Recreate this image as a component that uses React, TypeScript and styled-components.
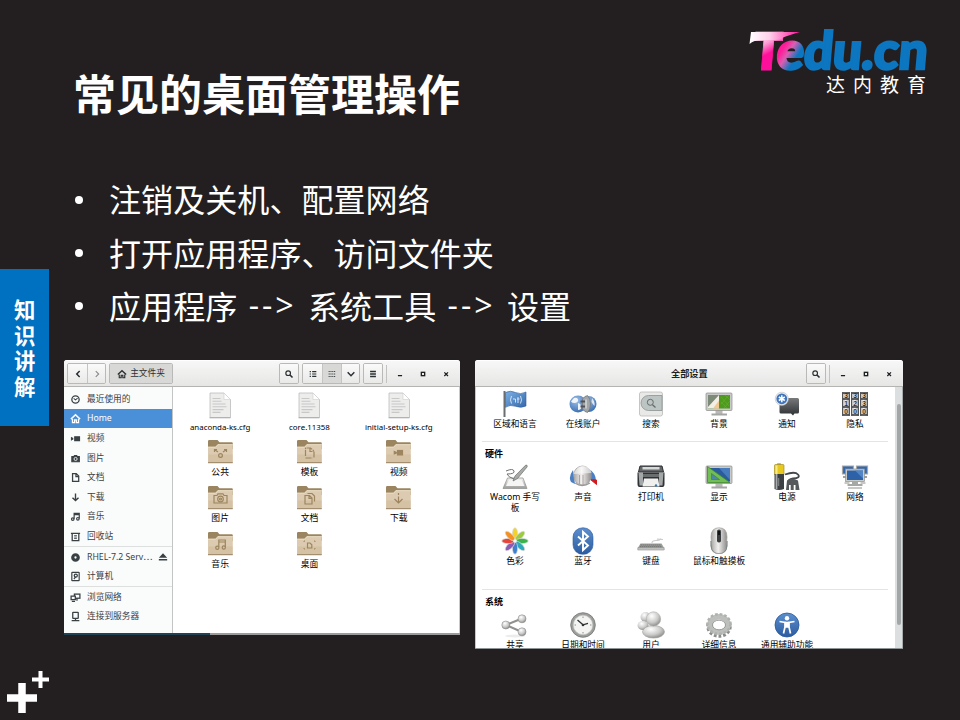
import React from "react";
import styled, { createGlobalStyle, css } from "styled-components";

const Global = createGlobalStyle`
  *, *::before, *::after { box-sizing: border-box; }
  body { margin: 0; background: #231f20; }
`;

const cjk = `"Noto Sans CJK SC", sans-serif`;

/* ---------- slide ---------- */

const Slide = styled.main`
  display: flex;
  width: 960px;
  height: 720px;
  overflow: hidden;
  background: #231f20;
  color: #fff;
  font-family: ${cjk};
`;

const Rail = styled.aside`
  display: flex;
  flex-direction: column;
  justify-content: space-between;
  width: 64px;
  padding: 269px 0 7px;
`;

const SectionTag = styled.div`
  width: 49px;
  height: 157px;
  padding: 27px 13px 0 14px;
  background: #0070c0;
  font-size: 21.4px;
  font-weight: 700;
  line-height: 25.6px;
  word-break: break-all;
`;

const Main = styled.div`
  display: flex;
  flex-direction: column;
  width: 896px;
`;

const Header = styled.header`
  display: flex;
  justify-content: space-between;
  height: 172px;
  padding: 28px 28px 0 9px;
`;

const Title = styled.h1`
  margin: 32px 0 0;
  font-size: 43px;
  font-weight: 700;
  line-height: 64px;
`;

const Points = styled.ul`
  display: flex;
  flex-direction: column;
  height: 188px;
  margin: 0;
  padding: 0 0 0 10px;
  list-style: none;
`;

const Point = styled.li`
  display: flex;
  align-items: center;
  height: 53.4px;
  font-size: 32.1px;
  line-height: 52.6px;
  white-space: pre;

  &::before {
    content: "";
    width: 8px;
    height: 8px;
    margin: 2px 26px 0 1px;
    border-radius: 50%;
    background: #fff;
  }
`;

const Arrow = styled.span`
  font-family: "Open Sans", sans-serif;
  letter-spacing: 3px;
`;

const Windows = styled.section`
  display: flex;
  align-items: flex-start;
  gap: 15px;
`;

/* ---------- window chrome ---------- */

const Window = styled.div<{ $w: number; $h: number }>`
  display: flex;
  flex-direction: column;
  width: ${(p) => p.$w}px;
  height: ${(p) => p.$h}px;
  overflow: hidden;
  border-radius: 3px 3px 0 0;
  background: #fff;
  color: #1c1f20;
  font-family: "Noto Sans", ${cjk};
  font-size: 8.7px;
`;

const TitleBar = styled.div`
  display: flex;
  flex: none;
  align-items: center;
  height: 27px;
  padding: 0 4px 0 3px;
  border-top: 1px solid #fff;
  border-bottom: 1px solid #b4b4b2;
  background: linear-gradient(#f7f7f7, #e6e6e5);
`;

const ButtonGroup = styled.div<{ $ml?: number }>`
  display: flex;
  height: 21px;
  margin-left: ${(p) => p.$ml ?? 0}px;
  border: 1px solid #b9b9b7;
  border-radius: 2px;
  overflow: hidden;
`;

const Button = styled.button<{ $w: number; $active?: boolean }>`
  display: flex;
  align-items: center;
  justify-content: center;
  gap: 3px;
  width: ${(p) => p.$w}px;
  padding: 0;
  border: 0;
  background: ${(p) => (p.$active ? "#d8d8d6" : "linear-gradient(#fafafa, #e9e9e8)")};
  color: #2a3033;
  font: inherit;
  line-height: 19px;
  white-space: nowrap;

  & + & {
    border-left: 1px solid #c4c4c2;
  }
`;

const Caption = styled.div`
  flex: 1;
  padding-left: 193px;
  font-size: 9.2px;
  font-weight: 700;
  line-height: 24px;
  white-space: nowrap;
`;

const Spacer = styled.div`
  flex: 1;
`;

const WindowControls = styled.div`
  display: flex;
  align-items: center;
  width: 70px;
  height: 18px;
  margin-left: 3px;
  padding-left: 8px;
  gap: 13px;
  border-left: 1px solid #c2c2c0;
`;

/* ---------- file manager ---------- */

const FilesBody = styled.div`
  display: flex;
  height: 246px;
  border-right: 1px solid #c9c9c9;
`;

const Sidebar = styled.nav`
  width: 109px;
  padding-top: 2px;
  border-right: 1px solid #c3c4c4;
  background: #fafbfb;
`;

const Place = styled.div<{ $active?: boolean; $divided?: boolean }>`
  display: flex;
  align-items: center;
  height: 19.6px;
  padding: 1px 5px 0 6px;
  gap: 6px;
  color: #3a4144;
  line-height: 19px;
  white-space: nowrap;

  svg {
    flex: none;
  }

  ${(p) =>
    p.$divided &&
    css`
      height: 20.6px;
      border-top: 1px solid #dedfdf;
    `}
  ${(p) =>
    p.$active &&
    css`
      background: #4a90d9;
      color: #fff;
    `}
`;

const PlaceName = styled.span`
  flex: 1;
`;

const FileGrid = styled.div`
  display: grid;
  flex: 1;
  grid-template-columns: repeat(3, 89.3px);
  grid-auto-rows: 46px;
  align-content: start;
  padding: 5px 0 0 2.5px;
`;

const FileCell = styled.div<{ $folder?: boolean }>`
  display: flex;
  flex-direction: column;
  align-items: center;
  padding-top: ${(p) => (p.$folder ? 1 : 0)}px;
  line-height: 15px;
  white-space: nowrap;
`;

const FileName = styled.span<{ $latin?: boolean }>`
  margin-top: ${(p) => (p.$latin ? 0 : 1)}px;
  font-size: ${(p) => (p.$latin ? 7.9 : 8.8)}px;
  color: #000;
`;

const FilesShadow = styled.div`
  display: flex;
  height: 2px;
  background: linear-gradient(90deg, #204455 0 146px, #9b9b9b 146px);
`;

/* ---------- settings ---------- */

const SettingsBody = styled.div`
  display: flex;
  height: 261px;
  overflow: hidden;
  border-left: 1px solid #c8c8c8;
`;

const Panels = styled.div`
  width: 419px;
  padding: 0 7px 0 6px;
`;

const Group = styled.section<{ $h: number; $top?: number }>`
  height: ${(p) => p.$h}px;
  padding-top: ${(p) => p.$top ?? 0}px;
  border-bottom: 1px solid #e4e4e4;
`;

const GroupTitle = styled.h2`
  margin: 0;
  padding: 4px 0 0 3px;
  color: #000;
  font-size: 9px;
  font-weight: 700;
  line-height: 15px;
`;

const PanelGrid = styled.div`
  display: grid;
  grid-template-columns: repeat(6, 68px);
  grid-auto-rows: 64px;
  margin-left: -1px;
`;

const Panel = styled.div`
  display: flex;
  flex-direction: column;
  align-items: center;
  gap: 1px;
  padding-top: 2px;
  color: #000;
  line-height: 11px;
  text-align: center;

  svg {
    flex: none;
  }
`;

const PanelName = styled.span`
  white-space: pre;
`;

const ScrollTrack = styled.div`
  width: 8px;
  height: 261px;
  padding: 17px 1px 0 2px;
  border-right: 1px solid #a9acad;
  background: #dcdfdf;
`;

const ScrollThumb = styled.div`
  width: 4px;
  height: 221px;
  border-radius: 2px;
  background: #a3a6a7;
`;

const SettingsEdge = styled.div`
  height: 1px;
  background: #8f9596;
`;

/* ---------- small symbolic icons ---------- */

const glyphs: Record<string, React.ReactNode> = {
  back: <path d="M8 2.5 4.5 6 8 9.5" strokeWidth="1.8" />,
  forward: <path d="M4.5 2.5 8 6 4.5 9.5" stroke="#888" strokeWidth="1.3" />,
  down: <path d="m2 4 4 4 4-4" strokeWidth="1.8" />,
  search: (
    <>
      <circle cx="5" cy="5" r="2.8" strokeWidth="1.4" />
      <path d="m7.2 7.2 3 3" strokeWidth="1.9" />
    </>
  ),
  list: <path d="M2 3.2h1.5M5 3.2h5M2 6h1.5M5 6h5M2 8.8h1.5M5 8.8h5" strokeWidth="1.4" />,
  grid: <path d="M2 3h8M2 6h8M2 9h8" strokeWidth="1.2" strokeDasharray="1.2 1" />,
  menu: <path d="M2.5 3h7M2.5 6h7M2.5 9h7" strokeWidth="1.6" />,
  min: <path d="M3.5 8h5" strokeWidth="1.6" />,
  max: <rect x="4" y="4" width="4" height="4" strokeWidth="1.6" />,
  close: <path d="m4 4 4.4 4.4M8.4 4 4 8.4" strokeWidth="1.5" />,
  home: (
    <>
      <path d="M1 6.700 6 2l5 4.700" strokeWidth="1.6" />
      <path d="M2.700 6.500v4h2.300V7.500h2v3h2.300v-4" strokeWidth="1.400" />
    </>
  ),
  clock: (
    <>
      <circle cx="6" cy="6" r="4" strokeWidth="1.400" />
      <path d="m4 4.800 2 1.600L8.300 4.500" strokeWidth="1.100" />
    </>
  ),
  video: (
    <>
      <rect x="4.500" y="3.500" width="6.500" height="5.500" fill="currentColor" stroke="none" />
      <path d="m1 4 2.600 1.400v1.700L1 8.500z" fill="currentColor" stroke="none" />
    </>
  ),
  camera: (
    <>
      <path d="M2 4h2l1-1.300h2.200L8.200 4h2v5.500H2z" fill="currentColor" strokeWidth="1.200" />
      <circle cx="6.100" cy="6.500" r="1.700" stroke="#fff" fill="none" strokeWidth=".9" />
    </>
  ),
  doc: <path d="M2.800 1.800h4L9.500 4.500V10.200H2.800zM6.500 2v3h3" strokeWidth="1.400" />,
  download: <path d="M6 1.500v7.500M2.700 6.200 6 9.400l3.300-3.200" strokeWidth="1.500" />,
  music: (
    <>
      <path d="M4.500 8.500V2.600h5.600v5.700M4.500 4h5.500" strokeWidth="1.300" />
      <circle cx="3" cy="8.800" r="1.400" strokeWidth="1.300" />
      <circle cx="8.600" cy="8.500" r="1.400" strokeWidth="1.300" />
    </>
  ),
  trash: (
    <>
      <path d="M1 2.500h10M2.400 3v7.500h7.200V3" strokeWidth="1.400" />
      <path d="M4.500 5h3M4.500 6.600h3M4.500 8.200h3" strokeWidth=".9" />
    </>
  ),
  disc: <circle cx="6" cy="6" r="3" strokeWidth="3.500" />,
  drive: (
    <>
      <rect x="2" y="1.400" width="8" height="9.200" rx=".5" strokeWidth="1.300" />
      <circle cx="6.300" cy="5" r="1.700" strokeWidth="1.400" />
      <path d="M4.200 8.700 6.200 6.500" strokeWidth="1.300" />
    </>
  ),
  network: (
    <>
      <rect x="4.800" y="2.300" width="6" height="4.500" strokeWidth="1.400" />
      <rect x="1.200" y="4.500" width="4.600" height="3.800" fill="#fafbfb" strokeWidth="1.400" />
      <path d="M2 10.200h3.500M7.600 6.500V9.500" strokeWidth="1.400" />
    </>
  ),
  server: (
    <>
      <rect x="3" y="1.500" width="6" height="6.500" rx=".5" strokeWidth="1.400" />
      <path d="M6 8v2M1.800 10.600h8.400" strokeWidth="1.400" />
    </>
  ),
  eject: <path d="M6 1.500 11 7H1zM1 8.300h10v2H1z" fill="currentColor" stroke="none" />,
};

const Glyph = ({ name, size = 10 }: { name: string; size?: number }) => (
  <svg width={size} height={size} viewBox="0 0 12 12" fill="none" stroke="currentColor">
    {glyphs[name]}
  </svg>
);

/* ---------- file icons ---------- */

const TextFileIcon = () => (
  <svg width="24" height="28" viewBox="0 0 24 28">
    <path d="M2 1h14l6.500 6.500V25.500H2z" fill="#ededec" stroke="#bdbdbc" strokeWidth=".8" />
    <path d="M16 1v6.500h6.500z" fill="#fff" stroke="#cfcfce" strokeWidth=".6" />
    <path d="M4.500 6.500h8M4.500 9.300h9M4.500 12h13M4.500 14.800h14M4.500 17.600h11M4.500 20.400h8" stroke="#c8c8c7" strokeWidth="1.100" />
    <path d="M1.500 25.800h21" stroke="#a5a5a5" strokeWidth=".9" />
  </svg>
);

const emblems: Record<string, React.ReactNode> = {
  share: (
    <>
      <circle cx="13.500" cy="16.500" r="1.900" />
      <path d="m11 13-3.500-2.500m0 2.500v-2.500H10M16 13l3.500-2.500m0 2.500v-2.500H17" />
    </>
  ),
  template: <path d="M9.500 17V9h5l3.500 3v7M14 9v3.500h4M9.500 19h7" strokeDasharray="6 .8 1.500 .8" />,
  video: (
    <>
      <rect x="12.500" y="11.500" width="5" height="4.400" fill="#9c855f" />
      <path d="m9.300 12.500 2 .8v.8l-2 .8z" fill="#9c855f" />
    </>
  ),
  camera: (
    <>
      <path d="M7 10.500h3l1-1.700h5l1 1.700h3V18H7z" />
      <circle cx="13.500" cy="14" r="2.800" />
      <circle cx="13.500" cy="14" r="1" />
    </>
  ),
  docs: <path d="M9 10.500h4.500L16 13v6H9zM13 10.500V13.300h3M11.500 8.500h4.500L18.500 11v5.500" />,
  download: <path d="M13.500 8v2M13.500 11.500v5.500M9.500 14l4 4 4-4" />,
  music: (
    <>
      <path d="M11.800 16V9h6.500v7M12 11h6" />
      <circle cx="10.300" cy="16.700" r="1.600" />
      <circle cx="16.800" cy="16.500" r="1.600" />
    </>
  ),
  desktop: (
    <>
      <path d="M11.500 12h2.500l1.800 1.800v3.200h-4.300z" />
      <path d="M8 11v-1h1M18 10h1v1M8 17v1h1M18 18h1V17" strokeWidth=".9" />
    </>
  ),
};

const FolderIcon = ({ emblem }: { emblem: string }) => (
  <svg width="27" height="25" viewBox="0 0 27 25">
    <path d="M1 2.200q0-1.200 1.200-1.200h8.300l2 2.300H24.800q1 0 1 1V10H1z" fill="#9b8560" />
    <path d="M1 7.800h7.500l2.300-2.500h15V23.600H1z" fill="#dccbb0" />
    <path d="M1.500 15.500h24V23h-24z" fill="#d5c1a3" />
    <path d="M1 8.200h7.600l2.300-2.500h14.900" stroke="#efe3cd" strokeWidth=".8" fill="none" />
    <path d="M1 23.700h24.800" stroke="#927b58" strokeWidth="1" />
    <g stroke="#9c855f" strokeWidth="1.200" fill="none">{emblems[emblem]}</g>
  </svg>
);

/* ---------- settings icons ---------- */

const GradientDefs = styled.svg`
  display: block;
  width: 0;
  height: 0;
`;

const Defs = () => (
  <GradientDefs>
    <defs>
      <linearGradient id="metal" x1="0" y1="0" x2="0" y2="1">
        <stop offset="0" stopColor="#f2f2f1" />
        <stop offset="1" stopColor="#9a9c99" />
      </linearGradient>
      <linearGradient id="metalX" x1="0" y1="0" x2="1" y2="0">
        <stop offset="0" stopColor="#a8a6a4" />
        <stop offset=".45" stopColor="#f3f1f0" />
        <stop offset="1" stopColor="#8d8b8a" />
      </linearGradient>
      <radialGradient id="ball" cx=".38" cy=".3" r=".75">
        <stop offset="0" stopColor="#fff" />
        <stop offset=".6" stopColor="#c9cac8" />
        <stop offset="1" stopColor="#858784" />
      </radialGradient>
      <radialGradient id="blueBall" cx=".4" cy=".3" r=".8">
        <stop offset="0" stopColor="#9fc1ea" />
        <stop offset="1" stopColor="#2f66ac" />
      </radialGradient>
      <linearGradient id="blue" x1="0" y1="0" x2="0" y2="1">
        <stop offset="0" stopColor="#5c8fd0" />
        <stop offset="1" stopColor="#2b5c9f" />
      </linearGradient>
      <linearGradient id="flag" x1="0" y1="0" x2="1" y2="1">
        <stop offset="0" stopColor="#7db0e4" />
        <stop offset="1" stopColor="#3468aa" />
      </linearGradient>
      <linearGradient id="dark" x1="0" y1="0" x2="0" y2="1">
        <stop offset="0" stopColor="#77797b" />
        <stop offset="1" stopColor="#2e3133" />
      </linearGradient>
    </defs>
  </GradientDefs>
);

const Monitor = ({ children }: { children: React.ReactNode }) => (
  <>
    <path d="M10.500 20h7v4h-7z" fill="#b9bab8" />
    <path d="M6.500 23.500h15.500v2H6.500z" fill="#a4a6a3" />
    <rect x="1" y="3" width="26" height="17.500" rx="1" fill="#c9cbc8" stroke="#8b8d8a" strokeWidth=".7" />
    {children}
  </>
);

const icons: Record<string, React.ReactNode> = {
  flag: (
    <>
      <path d="M3.500 1v26" stroke="#6b6e6f" strokeWidth="2" />
      <path d="M4.500 2.500q5-2.500 10 0t10.500-.5v14q-5 2.500-10.500.3t-10 1z" fill="url(#flag)" stroke="#2f5f9c" strokeWidth=".6" />
      <path d="M10.500 6q-2 4 0 7.500M19.500 6q2 4 0 7.500M12 9h2.500v3.500M17 7v6M16 9h2.500" stroke="#cfe2f6" strokeWidth="1" fill="none" />
    </>
  ),
  accounts: (
    <>
      <circle cx="9" cy="14" r="8.500" fill="url(#blueBall)" />
      <path d="M5 8q3.500-1 4 1.500T6 13q-3 0-4-1.500M9 13q4 1 3.500 4T9 20z" fill="#f1f4f8" />
      <circle cx="19.500" cy="14" r="8" fill="url(#blueBall)" />
      <path d="M13.500 9q2-3 5-3.500 3 3 3 8.500t-3 8.500q-3-.5-5-3.500z" fill="#a3a6a8" stroke="#6e7173" strokeWidth=".7" />
      <path d="M11.500 11.500h5M11.500 16.500h5" stroke="#505356" strokeWidth="2" />
      <path d="M17 9.500v9" stroke="#d5d7d8" strokeWidth="1.500" />
      <path d="M23 8q3 3 2.500 8-2-2-3-4z" fill="#dce5ee" />
    </>
  ),
  search: (
    <>
      <rect x="2.500" y="2" width="23" height="24" rx="2" fill="#e9eae8" stroke="#b9bab8" strokeWidth=".8" />
      <path d="M25 5.500H11.500a7.500 7.500 0 0 0 0 15H25z" fill="#bcc5c3" stroke="#8c9492" strokeWidth=".8" />
      <circle cx="13.300" cy="12.300" r="3" fill="none" stroke="#666d6b" strokeWidth="1" />
      <path d="m15.500 14.700 3 2.800" stroke="#666d6b" strokeWidth="1.300" />
    </>
  ),
  background: (
    <Monitor>
      <rect x="3" y="5" width="22" height="13.500" fill="#4e9a1f" />
      <path d="M3 5h11v13.500H3z" fill="#7c8b78" />
      <path d="M3 17 14 5v13.500H3z" fill="#f4efe6" />
      <path d="m8 18.500 6-8v8z" fill="#f0c894" />
      <path d="m16 7 8 9m-8-4 6 6m-2-13 5 5m-1-5-8 9m9-3-6 7" stroke="#64ad2c" strokeWidth=".7" />
    </Monitor>
  ),
  notify: (
    <>
      <path d="M9 8h15.500q1.500 0 1.500 1.500V22q0 1.500-1.500 1.500H21.500L20 25.500 18 23.500H8q-1.500 0-1.500-1.500V11z" fill="url(#dark)" />
      <circle cx="8.800" cy="8.800" r="6.600" fill="#e8ebee" stroke="#b0b3b5" strokeWidth=".5" />
      <circle cx="8.800" cy="8.800" r="5.400" fill="#3f75bd" />
      <path d="M8.800 5.300v7M5.800 7l6 3.500M11.800 7l-6 3.500" stroke="#fff" strokeWidth="1.500" />
    </>
  ),
  privacy: (
    <>
      {[1, 10, 19].map((x, c) => (
        <g key={x}>
          <rect x={x} y="2.500" width="8" height="23" fill="url(#metalX)" />
          <path d={`M${x} 3h8M${x} 9h8M${x} 17h8M${x} 25h8`} stroke="#333638" strokeWidth="1.500" />
          <path d={`M${x + 0.5} 2.500v23M${x + 7.5} 2.500v23`} stroke="#515456" strokeWidth="1" />
          {["3", c + 1, "0"].map((n, i) => (
            <text key={i} x={x + 4} y={8.4 + i * 7.8} fontSize="6.500" fontWeight="700" textAnchor="middle" fontFamily="Liberation Sans, sans-serif" fill="#2b2d2f">
              {n}
            </text>
          ))}
        </g>
      ))}
    </>
  ),
  wacom: (
    <>
      <path d="M6.500 15h15.500l4 10.500H2z" fill="url(#metal)" stroke="#8c8e8b" strokeWidth=".7" />
      <path d="M8 16.500h12.500l3 6.500H5z" fill="#f5f5f4" />
      <path d="M5 8q7-3 8 0t-7 3q1 3 7 5" fill="none" stroke="#6f726f" strokeWidth="1" />
      <path d="m12 18 2-5L24.500 2.300q2-1 1.700 1.500L16.500 15.500z" fill="#a9aba9" stroke="#6c6f6c" strokeWidth=".7" />
    </>
  ),
  sound: (
    <>
      <path d="M4 7q-5 7-2 12l4 2zM20 6q7 4 7 12l-5-2z" fill="#4b7fc3" />
      <path d="M21.500 16.500 27.500 17v4.500z" fill="#d3181d" stroke="#d3181d" />
      <ellipse cx="13.500" cy="12.500" rx="9" ry="9.500" fill="url(#metalX)" stroke="#97918f" strokeWidth=".6" />
      <path d="M4.500 11Q8 2.500 15 3t7.500 7" fill="#fff" fillOpacity=".55" />
      <path d="M10.500 12v9M14 12v10" stroke="#a89c9b" strokeWidth=".9" />
      <path d="M6 20q7 5 15 0" fill="none" stroke="#9b9896" strokeWidth="1.300" />
    </>
  ),
  printer: (
    <>
      <path d="M3 3h22l1.500 6H1.500z" fill="#63676a" stroke="#2b2e30" strokeWidth="1" />
      <path d="M5.500 4h17v2.500h-17z" fill="#d7d9d8" />
      <path d="M.5 9.500h27V21q0 3-2 3h-23q-2 0-2-3z" fill="#303335" />
      <path d="M1.500 9.500h4.500v13H2.500zM22 9.500h4.500l-1 13H22z" fill="#a5a8a8" />
      <path d="M6 11h16v3H6z" fill="#6a6e70" />
      <path d="M7 15.500h14l1.500 8h-17z" fill="#f0f0ee" />
      <circle cx="19" cy="22.500" r="1.200" fill="#3e77bb" />
    </>
  ),
  display: (
    <Monitor>
      <rect x="3" y="5" width="22" height="13.500" fill="#2a5b9c" />
      <path d="M14 5h11v12z" fill="#467bbd" />
      <path d="M2.500 3.500 25 19.500H2.500z" fill="#72bd55" stroke="#3d8a2a" strokeWidth=".8" />
      <path d="m6.500 10.500 8 6H6.500z" fill="#4d88a5" stroke="#3d8a2a" strokeWidth=".7" />
    </Monitor>
  ),
  power: (
    <>
      <rect x="4" y="0" width="4" height="2.500" rx=".8" fill="#b9bab8" />
      <rect x="1.500" y="1.500" width="9.500" height="10.500" rx="1" fill="#e8c81e" stroke="#9b8209" strokeWidth=".6" />
      <path d="M3.500 2.500v9" stroke="#f9eb7f" strokeWidth="2" />
      <path d="M1.500 11h9.500v15q-5 2-9.500 0z" fill="#3c4042" />
      <path d="M3.500 11v15" stroke="#a8acae" strokeWidth="1.800" />
      <path d="M5.500 15v8" stroke="#787d80" strokeWidth="1.500" />
      <path d="M12 11.500q10-3.500 13 0t-5 4q-5 1-5 4" fill="none" stroke="#45494b" strokeWidth="1.800" />
      <path d="M14 17.500q5-3.500 11 0l1.500 9.500h-4v-5h-1.800v5h-3v-5H16v5h-3z" fill="#55595b" />
    </>
  ),
  network: (
    <>
      <path d="M1.500 3h11v8h-11zM15.500 3h11v8h-11z" fill="#3468ae" stroke="#a5a8a6" strokeWidth="1.200" />
      <path d="M2 14h6M20 14h6" stroke="#9da09e" strokeWidth="2" />
      <rect x="4.500" y="6" width="19" height="12.500" fill="#c9cbc8" stroke="#8e908d" strokeWidth=".7" />
      <rect x="6" y="7.500" width="16" height="9.500" fill="#2e62a8" />
      <path d="M14 7.500h8v8z" fill="#5285c5" />
      <path d="M11 18.500h6v3h-6zM6.500 21h15v2h-15z" fill="#a6a8a5" />
      <path d="M3.500 20h5M19.500 20h5M7 25h14" fill="none" stroke="#b4b6b3" strokeWidth="1.300" />
    </>
  ),
  color: (
    <>
      <circle cx="14" cy="14" r="5" fill="#ececec" />
      {["#f3d22b", "#9ccc3c", "#3bb34a", "#2fa9b8", "#3f7fd0", "#8b5bb5", "#e8443a", "#f39123"].map((c, i) => (
        <ellipse key={c} cx="14" cy="7" rx="2.600" ry="6.200" fill={c} stroke="#d8d8d8" strokeWidth=".7" transform={`rotate(${i * 45} 14 14)`} />
      ))}
      <circle cx="14" cy="14" r="1.800" fill="#fff" fillOpacity=".8" />
    </>
  ),
  bluetooth: (
    <>
      <rect x="4" y=".8" width="20" height="26.500" rx="9.500" fill="url(#blue)" stroke="#2d5b9c" strokeWidth=".6" />
      <path d="m9 9.500 10 9-5 4.500V5l5 4.500-10 9" fill="none" stroke="#fff" strokeWidth="1.900" />
    </>
  ),
  keyboard: (
    <>
      <path d="M15 16q0-2.500 4-2.500t5-2M20 12l6 .5" fill="none" stroke="#cbcdca" strokeWidth="1.200" />
      <path d="M3.500 16.500h21l2.700 4.500H.8z" fill="#9c9e9b" />
      <path d="M.8 20.700h26.400v2.300H.8z" fill="#c5c7c4" stroke="#8e908d" strokeWidth=".6" />
      <path d="M3.500 18h20.500M3 19.600h22" stroke="#646663" strokeWidth=".7" strokeDasharray="1.500 .5" />
    </>
  ),
  mouse: (
    <>
      <path d="M5.500 14h17v5q-1 8-8.500 8t-8.500-8z" fill="#65706a" />
      <path d="M14 .8q8 0 8 9.200l-1 12q-2 4.500-7 4.500t-7-4.500L6 10Q6 .8 14 .8z" fill="url(#metalX)" stroke="#9b9d9a" strokeWidth=".7" />
      <rect x="12" y="2.500" width="4" height="13" rx="1.800" fill="#3a3d3f" />
      <path d="M14 4v4" stroke="#0c0d0e" strokeWidth="1.800" />
    </>
  ),
  share: (
    <>
      <ellipse cx="14" cy="25" rx="10" ry="1.500" fill="#ececec" />
      <path d="M21 7.500 5 14l16 7" fill="none" stroke="#8f918e" strokeWidth="2" />
      <circle cx="4.800" cy="14" r="4" fill="url(#ball)" stroke="#8a8c89" strokeWidth=".6" />
      <circle cx="21" cy="7.800" r="4" fill="url(#ball)" stroke="#8a8c89" strokeWidth=".6" />
      <circle cx="21" cy="20.800" r="4" fill="url(#ball)" stroke="#8a8c89" strokeWidth=".6" />
    </>
  ),
  time: (
    <>
      <circle cx="14" cy="14" r="12.300" fill="#9c9e9b" stroke="#747673" strokeWidth=".8" />
      <circle cx="14" cy="14" r="9.700" fill="#f4f4f2" stroke="#c5c7c4" strokeWidth=".7" />
      <path d="M14 5.500v1.500M14 21v1.500M5.500 14H7M21 14h1.500" stroke="#777" strokeWidth=".8" />
      <path d="m8.500 9 5.500 4.800 5-1.500" fill="none" stroke="#303335" strokeWidth="1.300" />
      <circle cx="14" cy="14" r="1.300" fill="#303335" />
    </>
  ),
  users: (
    <>
      <circle cx="8.500" cy="6" r="5" fill="url(#ball)" />
      <ellipse cx="6" cy="14.500" rx="5.500" ry="4.500" fill="url(#ball)" />
      <ellipse cx="16.500" cy="20.800" rx="11" ry="6.300" fill="url(#ball)" stroke="#9c9e9b" strokeWidth=".6" />
      <circle cx="16.500" cy="8" r="7.200" fill="url(#ball)" stroke="#aeb0ad" strokeWidth=".6" />
    </>
  ),
  details: (
    <>
      <ellipse cx="14" cy="15.500" rx="11" ry="9.500" fill="none" stroke="#898b88" strokeWidth="3.500" strokeDasharray="2.700 1.900" />
      <ellipse cx="14" cy="13.500" rx="9" ry="7.700" fill="none" stroke="#bdbfbc" strokeWidth="5.500" />
      <ellipse cx="14" cy="13" rx="11.500" ry="9.800" fill="none" stroke="#b0b2af" strokeWidth="2.500" strokeDasharray="2.700 1.900" />
      <ellipse cx="14" cy="14" rx="6.500" ry="4.800" fill="#fff" stroke="#858784" strokeWidth=".8" />
    </>
  ),
  access: (
    <>
      <circle cx="14" cy="14" r="12" fill="url(#blue)" stroke="#2a5999" strokeWidth=".8" />
      <circle cx="14" cy="7.300" r="2.200" fill="#fff" />
      <path d="m6.500 10.500 5.500 1v4.500L10.500 22.500M21.500 10.500 16 11.500v4.500l1.500 6.500" fill="none" stroke="#fff" strokeWidth="1.700" />
      <path d="M11.700 10.700h4.600v6h-4.600z" fill="#fff" />
    </>
  ),
};

const SettingsIcon = ({ name }: { name: string }) => (
  <svg width="28" height="28" viewBox="0 0 28 28">
    {icons[name]}
  </svg>
);

/* ---------- brand ---------- */

const LogoMark = styled.svg`
  width: 184px;
  height: 72px;
  overflow: visible;
`;

const Logo = () => (
  <LogoMark viewBox="0 0 184 72">
    <defs>
      <linearGradient id="tGrad" gradientUnits="userSpaceOnUse" x1="6" y1="4" x2="20" y2="30">
        <stop offset=".1" stopColor="#fff" />
        <stop offset=".5" stopColor="#ff9ad4" />
        <stop offset=".85" stopColor="#ff109a" />
      </linearGradient>
      <linearGradient id="swoosh" x1="0" y1="0" x2="1" y2="0">
        <stop offset="0" stopColor="#fff" />
        <stop offset=".4" stopColor="#ffd0ea" />
        <stop offset="1" stopColor="#ff109a" />
      </linearGradient>
      <linearGradient id="eGrad" gradientUnits="userSpaceOnUse" x1="32" y1="22" x2="50" y2="32">
        <stop offset="0" stopColor="#ff1c9a" />
        <stop offset=".35" stopColor="#d95fb0" />
        <stop offset=".8" stopColor="#0c76c0" />
      </linearGradient>
    </defs>
    <g fontFamily="Lato, sans-serif" fontWeight="900" transform="translate(4 0) skewX(-5)" strokeLinejoin="miter">
      <text x="3" y="42" fontFamily="Open Sans, sans-serif" fontWeight="800" fontSize="53" fill="url(#tGrad)" stroke="url(#tGrad)" strokeWidth=".8" textLength="30" lengthAdjust="spacingAndGlyphs">
        T
      </text>
      <text x="27" y="41" fontSize="52" textLength="151" lengthAdjust="spacingAndGlyphs" fill="#0c76c0" stroke="#0c76c0" strokeWidth="2.600">
        <tspan fill="url(#eGrad)" stroke="url(#eGrad)">e</tspan>du.cn
      </text>
    </g>
    <path d="M3 4h49q-11 3-17 5.500-3 2.500-9 2.500H13Q6 12 1.500 16z" fill="url(#swoosh)" />
    <text x="78" y="64" fontFamily={cjk} fontSize="19" letterSpacing="8" fill="#fff">
      达内教育
    </text>
  </LogoMark>
);

const PlusMark = () => (
  <svg width="50" height="43" viewBox="0 0 50 43">
    <path d="M22 13v30M7 28h30" stroke="#fff" strokeWidth="7.500" />
    <path d="M40.500 1v17M32 9.500h17" stroke="#fff" strokeWidth="4" />
  </svg>
);

/* ---------- content ---------- */

type PlaceData = { icon: string; name: string; active?: boolean; divided?: boolean; eject?: boolean };

const places: PlaceData[] = [
  { icon: "clock", name: "最近使用的" },
  { icon: "home", name: "Home", active: true },
  { icon: "video", name: "视频" },
  { icon: "camera", name: "图片" },
  { icon: "doc", name: "文档" },
  { icon: "download", name: "下载" },
  { icon: "music", name: "音乐" },
  { icon: "trash", name: "回收站" },
  { icon: "disc", name: "RHEL-7.2 Serv⋯", divided: true, eject: true },
  { icon: "drive", name: "计算机" },
  { icon: "network", name: "浏览网络", divided: true },
  { icon: "server", name: "连接到服务器" },
];

const files: { name: string; emblem?: string }[] = [
  { name: "anaconda-ks.cfg" },
  { name: "core.11358" },
  { name: "initial-setup-ks.cfg" },
  { name: "公共", emblem: "share" },
  { name: "模板", emblem: "template" },
  { name: "视频", emblem: "video" },
  { name: "图片", emblem: "camera" },
  { name: "文档", emblem: "docs" },
  { name: "下载", emblem: "download" },
  { name: "音乐", emblem: "music" },
  { name: "桌面", emblem: "desktop" },
];

type PanelData = { icon: string; name: string };

const personal: PanelData[] = [
  { icon: "flag", name: "区域和语言" },
  { icon: "accounts", name: "在线账户" },
  { icon: "search", name: "搜索" },
  { icon: "background", name: "背景" },
  { icon: "notify", name: "通知" },
  { icon: "privacy", name: "隐私" },
];
const hardware: PanelData[] = [
  { icon: "wacom", name: "Wacom 手写\n板" },
  { icon: "sound", name: "声音" },
  { icon: "printer", name: "打印机" },
  { icon: "display", name: "显示" },
  { icon: "power", name: "电源" },
  { icon: "network", name: "网络" },
  { icon: "color", name: "色彩" },
  { icon: "bluetooth", name: "蓝牙" },
  { icon: "keyboard", name: "键盘" },
  { icon: "mouse", name: "鼠标和触摸板" },
];
const system: PanelData[] = [
  { icon: "share", name: "共享" },
  { icon: "time", name: "日期和时间" },
  { icon: "users", name: "用户" },
  { icon: "details", name: "详细信息" },
  { icon: "access", name: "通用辅助功能" },
];

const PanelList = ({ items }: { items: PanelData[] }) => (
  <PanelGrid>
    {items.map((item) => (
      <Panel key={item.icon}>
        <SettingsIcon name={item.icon} />
        <PanelName>{item.name}</PanelName>
      </Panel>
    ))}
  </PanelGrid>
);

const Controls = () => (
  <WindowControls>
    <Glyph name="min" />
    <Glyph name="max" />
    <Glyph name="close" />
  </WindowControls>
);

const FilesWindow = () => (
  <Window $w={396} $h={275}>
    <TitleBar>
      <ButtonGroup>
        <Button $w={19}><Glyph name="back" /></Button>
        <Button $w={18}><Glyph name="forward" /></Button>
      </ButtonGroup>
      <ButtonGroup $ml={3}>
        <Button $w={62} $active><Glyph name="home" />主文件夹</Button>
      </ButtonGroup>
      <Spacer />
      <ButtonGroup>
        <Button $w={18}><Glyph name="search" /></Button>
      </ButtonGroup>
      <ButtonGroup $ml={3}>
        <Button $w={19}><Glyph name="list" /></Button>
        <Button $w={19} $active><Glyph name="grid" /></Button>
        <Button $w={18}><Glyph name="down" /></Button>
      </ButtonGroup>
      <ButtonGroup $ml={3}>
        <Button $w={18}><Glyph name="menu" /></Button>
      </ButtonGroup>
      <Controls />
    </TitleBar>
    <FilesBody>
      <Sidebar>
        {places.map((p) => (
          <Place key={p.name} $active={p.active} $divided={p.divided}>
            <Glyph name={p.icon} size={11} />
            <PlaceName>{p.name}</PlaceName>
            {p.eject && <Glyph name="eject" />}
          </Place>
        ))}
      </Sidebar>
      <FileGrid>
        {files.map((f) => (
          <FileCell key={f.name} $folder={!!f.emblem}>
            {f.emblem ? <FolderIcon emblem={f.emblem} /> : <TextFileIcon />}
            <FileName $latin={!f.emblem}>{f.name}</FileName>
          </FileCell>
        ))}
      </FileGrid>
    </FilesBody>
    <FilesShadow />
  </Window>
);

const SettingsWindow = () => (
  <Window $w={428} $h={289}>
    <TitleBar>
      <Caption>全部设置</Caption>
      <ButtonGroup>
        <Button $w={18}><Glyph name="search" /></Button>
      </ButtonGroup>
      <Controls />
    </TitleBar>
    <SettingsBody>
      <Panels>
        <Group $h={55} $top={1}>
          <PanelList items={personal} />
        </Group>
        <Group $h={148}>
          <GroupTitle>硬件</GroupTitle>
          <PanelList items={hardware} />
        </Group>
        <Group $h={60}>
          <GroupTitle>系统</GroupTitle>
          <PanelList items={system} />
        </Group>
      </Panels>
      <ScrollTrack>
        <ScrollThumb />
      </ScrollTrack>
    </SettingsBody>
    <SettingsEdge />
  </Window>
);

export default function App() {
  return (
    <>
      <Global />
      <Slide>
        <Rail>
          <SectionTag>知识讲解</SectionTag>
          <PlusMark />
        </Rail>
        <Main>
          <Header>
            <Title>常见的桌面管理操作</Title>
            <Logo />
          </Header>
          <Points>
            <Point>注销及关机、配置网络</Point>
            <Point>打开应用程序、访问文件夹</Point>
            <Point>
              应用程序<Arrow>{" --> "}</Arrow>系统工具<Arrow>{" --> "}</Arrow>设置
            </Point>
          </Points>
          <Windows>
            <FilesWindow />
            <SettingsWindow />
          </Windows>
        </Main>
      </Slide>
      <Defs />
    </>
  );
}
